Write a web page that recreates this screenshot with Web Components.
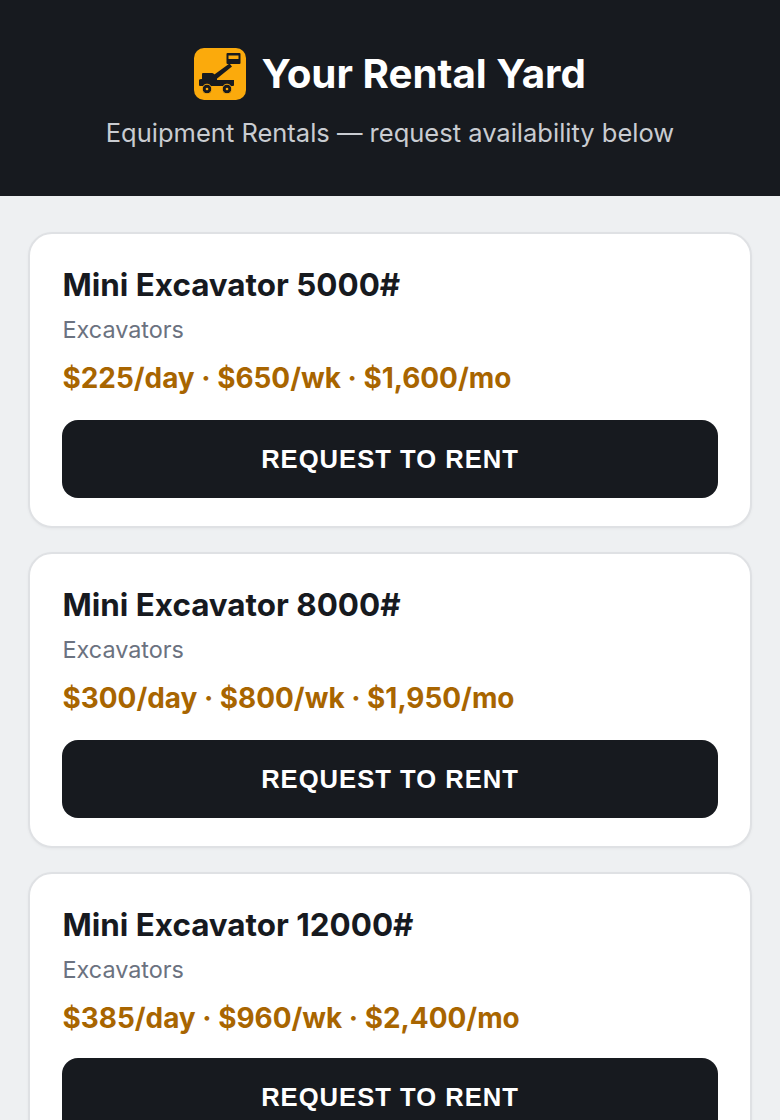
<!DOCTYPE html>
<html>
<head>
<meta charset="utf-8">
<title>Your Rental Yard</title>
<style>
    html, body { margin: 0; height: 1120px; overflow: hidden; background: #eef0f2; font-family: Inter, "Liberation Sans", sans-serif; }
</style>
</head>
<body>
<yard-header title="Your Rental Yard" subtitle="Equipment Rentals — request availability below"></yard-header>
<yard-list>
    <rental-card name="Mini Excavator 5000#" category="Excavators" rates="$225/day · $650/wk · $1,600/mo"></rental-card>
    <rental-card name="Mini Excavator 8000#" category="Excavators" rates="$300/day · $800/wk · $1,950/mo"></rental-card>
    <rental-card name="Mini Excavator 12000#" category="Excavators" rates="$385/day · $960/wk · $2,400/mo" style="--btn-gap: 24px"></rental-card>
</yard-list>
<script>
class YardHeader extends HTMLElement {
    constructor() {
        super();
        this.attachShadow({ mode: 'open' });
    }

    connectedCallback() {
        this.shadowRoot.innerHTML = `
            <style>
                :host { display: block; box-sizing: border-box; height: 196px; padding-top: 48px; background: #171a1f; text-align: center; }
                .brand { display: flex; align-items: center; justify-content: center; gap: 15.5px; height: 52px; }
                h1 { margin: 0; font-size: 40.3px; font-weight: 700; line-height: 52px; color: #fff; }
                svg { display: block; width: 52px; height: 52px; }
                p { margin: 19px 0 0; font-size: 25.5px; line-height: 28px; color: #c9ccd1; }
            </style>
            <div class="brand">
                <svg viewBox="0 0 52 52">
                    <rect width="52" height="52" rx="10" fill="#fbaa0c"/>
                    <rect x="32.5" y="5" width="14" height="11" rx="1" fill="#171a1f"/>
                    <rect x="34.5" y="7.5" width="10" height="3.5" fill="#fbaa0c"/>
                    <path d="M19 27.5 L35.5 15.5 L38 18.5 L22.5 31 Z" fill="#171a1f"/>
                    <path d="M8 26 q0 -1 1 -1 h9 q1 0 2 1 l3 3 v3 h17 v5 q0 1 -1 1 h-33 q-1 0 -1 -1 v-5 q0 -1 3 -1 z" fill="#171a1f"/>
                    <circle cx="13" cy="41" r="4.8" fill="#171a1f" stroke="#fbaa0c" stroke-width="1"/>
                    <circle cx="33" cy="41" r="4.8" fill="#171a1f" stroke="#fbaa0c" stroke-width="1"/>
                    <circle cx="13" cy="41" r="1.3" fill="#fbaa0c"/>
                    <circle cx="33" cy="41" r="1.3" fill="#fbaa0c"/>
                </svg>
                <h1></h1>
            </div>
            <p></p>
        `;
        this.shadowRoot.querySelector('h1').textContent = this.getAttribute('title');
        this.shadowRoot.querySelector('p').textContent = this.getAttribute('subtitle');
    }
}

class YardList extends HTMLElement {
    constructor() {
        super();
        this.attachShadow({ mode: 'open' });
        this.shadowRoot.innerHTML = `
            <style>
                :host { display: flex; flex-direction: column; gap: 24px; padding: 36px 28px 0; }
            </style>
            <slot></slot>
        `;
    }
}

class RentalCard extends HTMLElement {
    constructor() {
        super();
        this.attachShadow({ mode: 'open' });
    }

    connectedCallback() {
        this.shadowRoot.innerHTML = `
            <style>
                :host { display: block; box-sizing: border-box; height: 296px; padding: 32px; background: #fff; border: 2px solid #dfe1e4; border-radius: 24px; box-shadow: 0 1px 3px rgba(0,0,0,0.04); }
                h2, .cat, .rates { padding-left: 0.5px; }
                h2 { margin: 0; padding-top: 1px; font-size: 31.4px; line-height: 36px; font-weight: 700; color: #171a1f; }
                .cat { margin-top: 13px; font-size: 23.4px; line-height: 28px; color: #6b7280; }
                .rates { margin-top: 18px; font-size: 27.9px; line-height: 32px; font-weight: 700; color: #a86500; }
                button { display: block; width: 100%; height: 78px; margin-top: var(--btn-gap, 26px); padding: 0; border: none; border-radius: 16px; background: #171a1f; color: #fff; font-family: "Liberation Sans", Arial, sans-serif; font-size: 25.6px; font-weight: 700; letter-spacing: 1px; }
            </style>
            <h2></h2>
            <div class="cat"></div>
            <div class="rates"></div>
            <button>REQUEST TO RENT</button>
        `;
        this.shadowRoot.querySelector('h2').textContent = this.getAttribute('name');
        this.shadowRoot.querySelector('.cat').textContent = this.getAttribute('category');
        this.shadowRoot.querySelector('.rates').textContent = this.getAttribute('rates');
    }
}

customElements.define('yard-header', YardHeader);
customElements.define('yard-list', YardList);
customElements.define('rental-card', RentalCard);
</script>
</body>
</html>
